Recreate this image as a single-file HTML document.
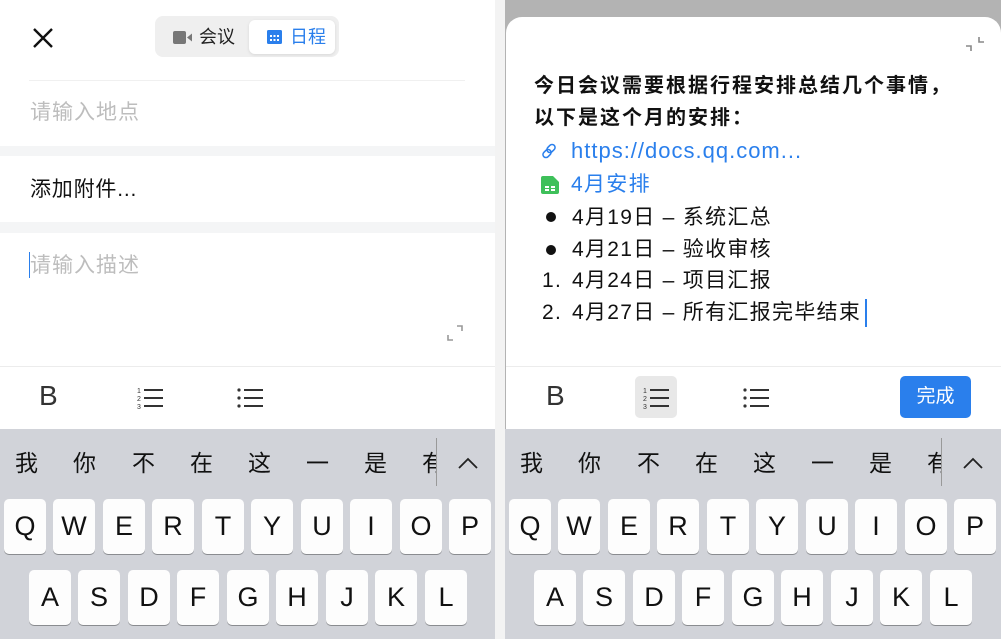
<!DOCTYPE html>
<html><head><meta charset="utf-8"><style>
*{margin:0;padding:0;box-sizing:border-box}
body{width:1001px;height:639px;position:relative;overflow:hidden;background:#f3f3f3;font-family:"Liberation Sans","Noto Sans CJK SC",sans-serif}
.a{position:absolute}
.scr{position:absolute;top:0;height:639px;overflow:hidden}
.kb{position:absolute;left:0;top:429px;width:496px;height:210px;background:#d1d3d9}
.key{position:absolute;width:42px;height:55px;background:#fdfdfd;border-radius:5px;box-shadow:0 1px 0 #8a8c90;font-size:27px;color:#111;text-align:center;line-height:55px}
.cand{position:absolute;top:18px;font-size:23px;color:#111;line-height:32px}
.tb{position:absolute;left:0;width:496px;height:62px;background:#fff;border-top:1px solid #ececec}
.B{position:absolute;font-size:28px;color:#333;top:13px}
.line{position:absolute;left:29px;font-size:21px;line-height:32px;color:#111;letter-spacing:1.3px;white-space:nowrap}
</style></head><body>

<!-- LEFT -->
<div class="scr" style="left:0;width:495px;background:#fff">
  <svg class="a" style="left:31px;top:26px" width="24" height="24" viewBox="0 0 24 24"><path d="M3 3L21 21M21 3L3 21" stroke="#111" stroke-width="2.4"/></svg>
  <div class="a" style="left:155px;top:16px;width:184px;height:41px;background:#efefef;border-radius:8px"></div>
  <div class="a" style="left:249px;top:20px;width:86px;height:34px;background:#fff;border-radius:6px;box-shadow:0 1px 3px rgba(0,0,0,.1)"></div>
  <svg class="a" style="left:173px;top:31px" width="20" height="13" viewBox="0 0 20 13"><rect x="0" y="0" width="13" height="13" rx="2" fill="#777"/><path d="M14 6.5L19 2.5V10.5Z" fill="#777"/></svg>
  <div class="a" style="left:199px;top:25px;font-size:18px;color:#222;line-height:24px">会议</div>
  <svg class="a" style="left:267px;top:30px" width="15" height="14" viewBox="0 0 15 14"><rect width="15" height="14" rx="1.5" fill="#2a7fec"/><g fill="#fff"><rect x="3" y="5" width="2" height="2"/><rect x="6.5" y="5" width="2" height="2"/><rect x="10" y="5" width="2" height="2"/><rect x="3" y="9" width="2" height="2"/><rect x="6.5" y="9" width="2" height="2"/><rect x="10" y="9" width="2" height="2"/></g></svg>
  <div class="a" style="left:290px;top:25px;font-size:18px;color:#2a7fec;line-height:24px">日程</div>
  <div class="a" style="left:29px;top:80px;width:436px;height:1px;background:#f0f0f0"></div>
  <div class="a" style="left:30px;top:99px;font-size:21px;letter-spacing:1px;color:#bdbdbd;line-height:28px">请输入地点</div>
  <div class="a" style="left:0;top:146px;width:495px;height:10px;background:#f4f5f6"></div>
  <div class="a" style="left:30px;top:176px;font-size:21px;letter-spacing:0.8px;color:#111;line-height:28px">添加附件...</div>
  <div class="a" style="left:0;top:222px;width:495px;height:11px;background:#f4f5f6"></div>
  <div class="a" style="left:29px;top:252px;width:1px;height:26px;background:#2a7fec"></div>
  <div class="a" style="left:30px;top:252px;font-size:21px;letter-spacing:1px;color:#bdbdbd;line-height:28px">请输入描述</div>
  <svg class="a" style="left:446px;top:324px" width="18" height="18" viewBox="0 0 18 18"><path d="M11 2H16V7M2 11V16H7" stroke="#999" stroke-width="1.6" fill="none"/></svg>
  <div class="tb" style="top:366px">
    <div class="B" style="left:39px">B</div>
    <svg class="a" style="left:137px;top:19px" width="28" height="24" viewBox="0 0 28 24"><text x="0" y="7" font-size="7" font-family="Liberation Sans" fill="#333">1</text><text x="0" y="15" font-size="7" font-family="Liberation Sans" fill="#333">2</text><text x="0" y="23" font-size="7" font-family="Liberation Sans" fill="#333">3</text><path d="M7 4H26M7 12H26M7 20H26" stroke="#333" stroke-width="2"/></svg>
    <svg class="a" style="left:237px;top:19px" width="28" height="24" viewBox="0 0 28 24"><circle cx="2" cy="4" r="1.6" fill="#333"/><circle cx="2" cy="12" r="1.6" fill="#333"/><circle cx="2" cy="20" r="1.6" fill="#333"/><path d="M7 4H26M7 12H26M7 20H26" stroke="#333" stroke-width="2"/></svg>
  </div>
  <div class="kb">
    <div class="cand" style="left:15px">我</div><div class="cand" style="left:73px">你</div><div class="cand" style="left:132px">不</div><div class="cand" style="left:190px">在</div><div class="cand" style="left:248px">这</div><div class="cand" style="left:306px">一</div><div class="cand" style="left:364px">是</div><div class="cand" style="left:422px;width:14px;overflow:hidden">有</div>
    <div class="a" style="left:436px;top:9px;width:1px;height:48px;background:#999"></div>
    <svg class="a" style="left:457px;top:27px" width="22" height="14" viewBox="0 0 22 14"><path d="M2 12L11 3L20 12" stroke="#222" stroke-width="1.8" fill="none"/></svg>
    <div class="key" style="left:4px;top:70px">Q</div><div class="key" style="left:53px;top:70px">W</div><div class="key" style="left:103px;top:70px">E</div><div class="key" style="left:152px;top:70px">R</div><div class="key" style="left:202px;top:70px">T</div><div class="key" style="left:251px;top:70px">Y</div><div class="key" style="left:301px;top:70px">U</div><div class="key" style="left:350px;top:70px">I</div><div class="key" style="left:400px;top:70px">O</div><div class="key" style="left:449px;top:70px">P</div>
    <div class="key" style="left:29px;top:141px">A</div><div class="key" style="left:78px;top:141px">S</div><div class="key" style="left:128px;top:141px">D</div><div class="key" style="left:177px;top:141px">F</div><div class="key" style="left:227px;top:141px">G</div><div class="key" style="left:276px;top:141px">H</div><div class="key" style="left:326px;top:141px">J</div><div class="key" style="left:375px;top:141px">K</div><div class="key" style="left:425px;top:141px">L</div>
  </div>
</div>

<!-- RIGHT -->
<div class="scr" style="left:505px;width:496px;background:#b3b3b3">
  <div class="a" style="left:1px;top:17px;width:495px;height:640px;background:#fff;border-radius:16px 16px 0 0"></div>
  <svg class="a" style="left:459px;top:34px" width="22" height="20" viewBox="0 0 22 20"><path d="M2 12H7V17M20 8H15V3" stroke="#888" stroke-width="1.6" fill="none"/></svg>
  <div class="line" style="top:70px;font-weight:bold;font-size:20px;letter-spacing:2px">今日会议需要根据行程安排总结几个事情，</div>
  <div class="line" style="top:102px;font-weight:bold;font-size:20px;letter-spacing:2px">以下是这个月的安排：</div>
  <svg class="a" style="left:36px;top:143px" width="16" height="16" viewBox="0 0 16 16"><g stroke="#2a7fec" stroke-width="1.5" fill="none"><rect x="7" y="1" width="6" height="9" rx="3" transform="rotate(45 10 5.5)"/><rect x="3" y="6" width="6" height="9" rx="3" transform="rotate(45 6 10.5)"/></g></svg>
  <div class="line" style="left:66px;top:135px;color:#2a7fec;font-size:22px;letter-spacing:1px">https://docs.qq.com...</div>
  <svg class="a" style="left:36px;top:176px" width="18" height="18" viewBox="0 0 18 18"><path d="M2 0H12L18 6V16Q18 18 16 18H2Q0 18 0 16V2Q0 0 2 0Z" fill="#3ec05a"/><g fill="#fff"><rect x="4" y="10" width="4" height="2"/><rect x="10" y="10" width="4" height="2"/><rect x="4" y="13" width="4" height="2"/><rect x="10" y="13" width="4" height="2"/></g></svg>
  <div class="line" style="left:66px;top:169px;color:#2a7fec">4月安排</div>
  <div class="a" style="left:41px;top:212px;width:10px;height:10px;border-radius:50%;background:#111"></div>
  <div class="line" style="left:67px;top:202px">4月19日 – 系统汇总</div>
  <div class="a" style="left:41px;top:245px;width:10px;height:10px;border-radius:50%;background:#111"></div>
  <div class="line" style="left:67px;top:234px">4月21日 – 验收审核</div>
  <div class="line" style="left:37px;top:265px">1.</div>
  <div class="line" style="left:67px;top:265px">4月24日 – 项目汇报</div>
  <div class="line" style="left:37px;top:297px">2.</div>
  <div class="line" style="left:67px;top:297px">4月27日 – 所有汇报完毕结束</div>
  <div class="a" style="left:360px;top:299px;width:1.5px;height:28px;background:#2a7fec"></div>
  <div class="tb" style="top:366px;left:1px;width:495px">
    <div class="B" style="left:40px">B</div>
    <div class="a" style="left:129px;top:9px;width:42px;height:42px;background:#e8e8e8;border-radius:5px"></div>
    <svg class="a" style="left:137px;top:19px" width="28" height="24" viewBox="0 0 28 24"><text x="0" y="7" font-size="7" font-family="Liberation Sans" fill="#333">1</text><text x="0" y="15" font-size="7" font-family="Liberation Sans" fill="#333">2</text><text x="0" y="23" font-size="7" font-family="Liberation Sans" fill="#333">3</text><path d="M7 4H26M7 12H26M7 20H26" stroke="#333" stroke-width="2"/></svg>
    <svg class="a" style="left:237px;top:19px" width="28" height="24" viewBox="0 0 28 24"><circle cx="2" cy="4" r="1.6" fill="#333"/><circle cx="2" cy="12" r="1.6" fill="#333"/><circle cx="2" cy="20" r="1.6" fill="#333"/><path d="M7 4H26M7 12H26M7 20H26" stroke="#333" stroke-width="2"/></svg>
    <div class="a" style="left:394px;top:9px;width:71px;height:42px;background:#2a7fec;border-radius:5px;color:#fff;font-size:19px;line-height:42px;text-align:center">完成</div>
  </div>
  <div class="kb">
    <div class="cand" style="left:15px">我</div><div class="cand" style="left:73px">你</div><div class="cand" style="left:132px">不</div><div class="cand" style="left:190px">在</div><div class="cand" style="left:248px">这</div><div class="cand" style="left:306px">一</div><div class="cand" style="left:364px">是</div><div class="cand" style="left:422px;width:14px;overflow:hidden">有</div>
    <div class="a" style="left:436px;top:9px;width:1px;height:48px;background:#999"></div>
    <svg class="a" style="left:457px;top:27px" width="22" height="14" viewBox="0 0 22 14"><path d="M2 12L11 3L20 12" stroke="#222" stroke-width="1.8" fill="none"/></svg>
    <div class="key" style="left:4px;top:70px">Q</div><div class="key" style="left:53px;top:70px">W</div><div class="key" style="left:103px;top:70px">E</div><div class="key" style="left:152px;top:70px">R</div><div class="key" style="left:202px;top:70px">T</div><div class="key" style="left:251px;top:70px">Y</div><div class="key" style="left:301px;top:70px">U</div><div class="key" style="left:350px;top:70px">I</div><div class="key" style="left:400px;top:70px">O</div><div class="key" style="left:449px;top:70px">P</div>
    <div class="key" style="left:29px;top:141px">A</div><div class="key" style="left:78px;top:141px">S</div><div class="key" style="left:128px;top:141px">D</div><div class="key" style="left:177px;top:141px">F</div><div class="key" style="left:227px;top:141px">G</div><div class="key" style="left:276px;top:141px">H</div><div class="key" style="left:326px;top:141px">J</div><div class="key" style="left:375px;top:141px">K</div><div class="key" style="left:425px;top:141px">L</div>
  </div>
</div>
</body></html>
